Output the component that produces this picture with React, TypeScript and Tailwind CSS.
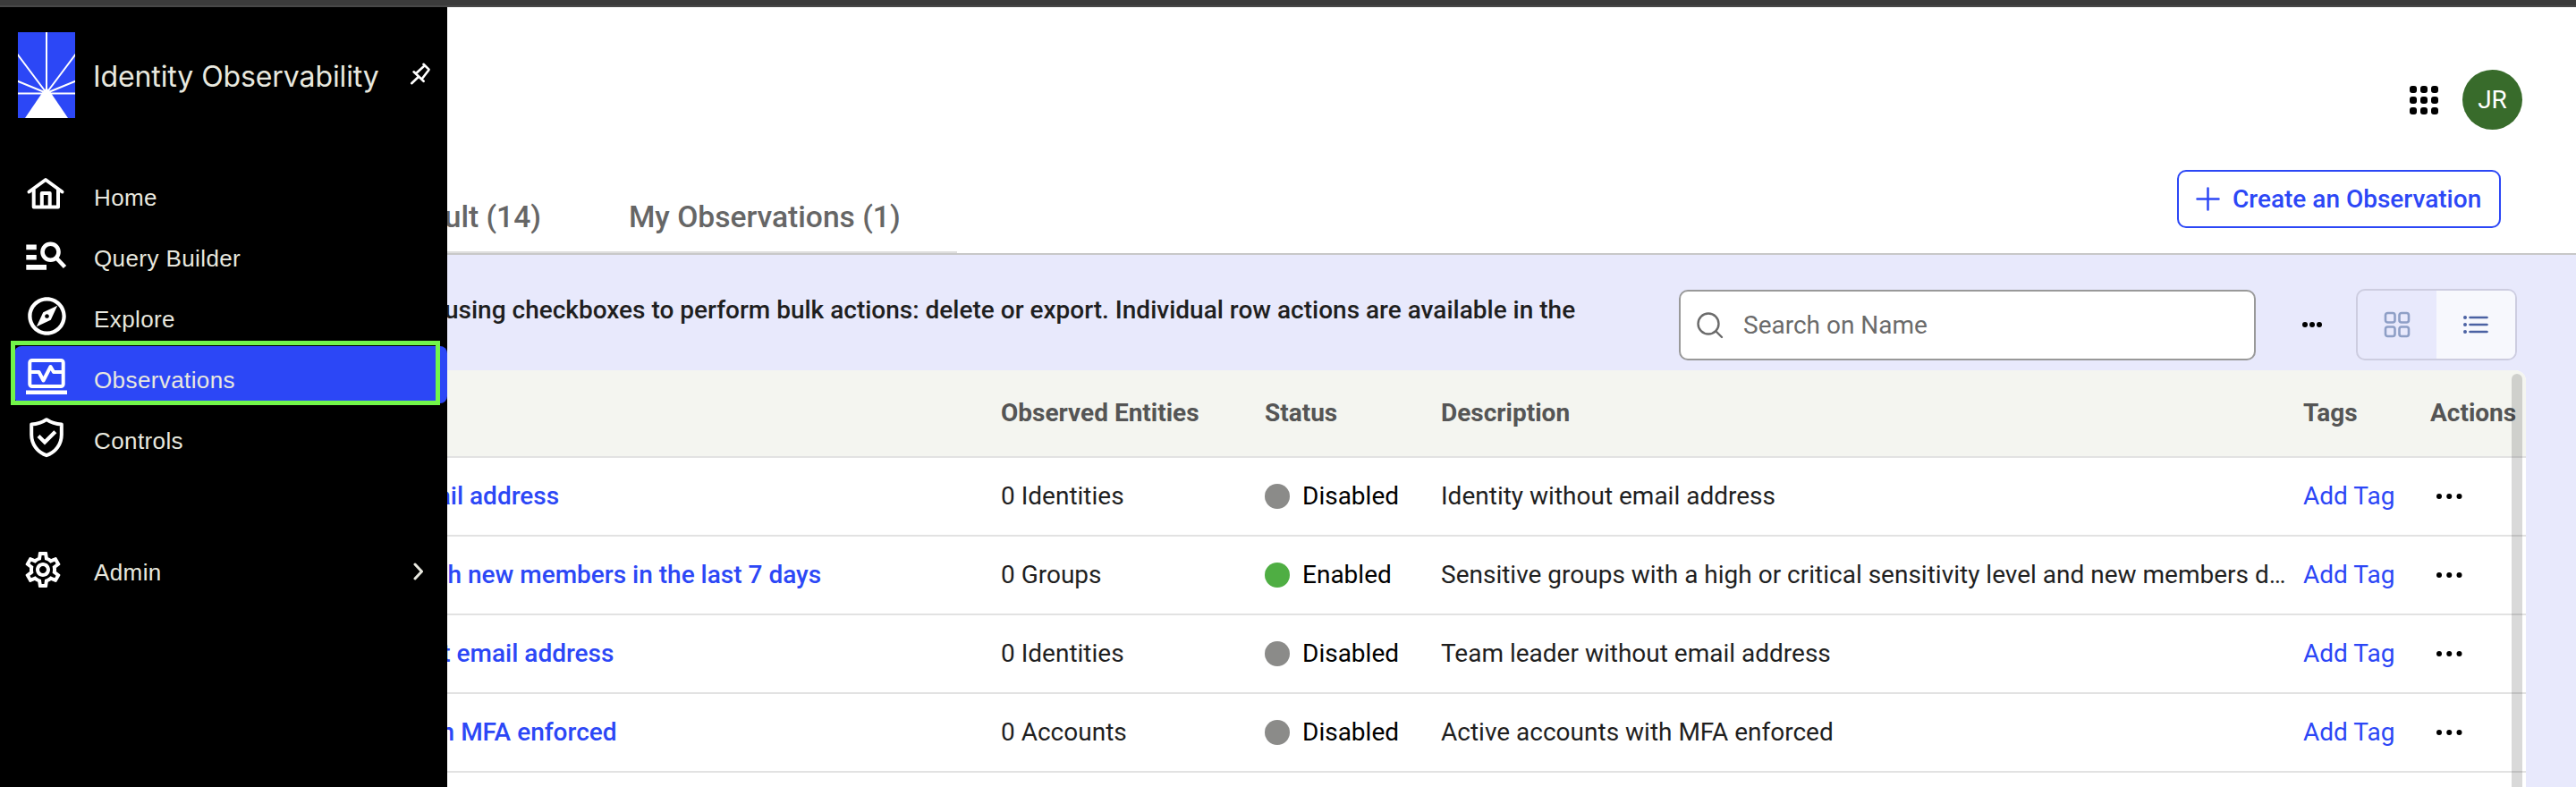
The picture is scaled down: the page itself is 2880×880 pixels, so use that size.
import React from "react";
import { MdOutlineExplore, MdOutlineSettings } from "react-icons/md";

const HomeIcon = () => (
  <svg width="48" height="48" viewBox="0 0 48 48" fill="none" stroke="#fff" strokeWidth="4">
    <path d="M4.500 21.500 23 8l18.500 13.500" strokeLinecap="round" strokeLinejoin="round" />
    <path d="M9.700 19v19.600h27.300V19" strokeLinejoin="round" />
    <path d="M18.800 38V23.100h8.900V38" strokeLinejoin="round" />
  </svg>
);

const QueryIcon = () => (
  <svg width="48" height="48" viewBox="0 0 48 48" fill="none" stroke="#fff">
    <path d="M1.300 15.400h11.500M1.300 26.700h11.500M1.300 37.900h22.700" strokeWidth="5.600" />
    <circle cx="28.500" cy="20.700" r="9" strokeWidth="4.600" />
    <path d="m34.500 27 10 10.500" strokeWidth="4.600" />
  </svg>
);

const ObservationsIcon = () => (
  <svg width="48" height="48" viewBox="0 0 48 48" fill="none" stroke="#fff" strokeWidth="4">
    <rect x="5.3" y="6" width="37.4" height="29" rx="2.5" />
    <path d="M6 19h9.5l5 9.5 8-15.5 3.5 6H42" strokeLinejoin="round" />
    <path d="M1 41.800h46" strokeWidth="4.600" />
  </svg>
);

const ShieldIcon = () => (
  <svg width="48" height="48" viewBox="0 0 48 48" fill="none" stroke="#fff" strokeWidth="4">
    <path d="M24 4.200C19.500 7.200 13 9.300 7.200 9.600V21C7.200 31.500 13.500 40.500 24 44.200C34.500 40.500 40.800 31.500 40.800 21V9.600C35 9.300 28.500 7.200 24 4.200Z" strokeLinejoin="round" />
    <path d="m15 22.500 7 7 11.800-11.800" strokeWidth="4.200" />
  </svg>
);

const PinIcon = () => (
  <svg width="23" height="25" viewBox="0 0 23 25" fill="none" stroke="#fff" strokeWidth="2.600" strokeLinecap="round" strokeLinejoin="round" className="ml-[36px] mt-[34px] shrink-0">
    <path d="m14.500 1.800 6 5.800M3.600 10.300l11 10.500M6.500 11.800l9-8.300M12.700 18.300l7.500-9.800M9 15.700l-7.800 7.500" />
  </svg>
);

const Logo = () => (
  <svg width="64" height="96" viewBox="0 0 64 96" className="shrink-0">
    <rect width="64" height="96" fill="#2c47f6" />
    <g stroke="#fff" strokeWidth="2">
      <path d="M32 0v68M32 68-1 24M32 68 65 24M32 68-1 54.500M32 68l33-13.500M0 68.500h64" />
    </g>
    <path d="M32 62 37 68 56 96H8L27 68Z" fill="#fff" />
  </svg>
);

const Dots = ({ gap, size }: { gap: number; size: number }) => (
  <svg width={gap * 2 + size} height={size} viewBox={`0 0 ${gap * 2 + size} ${size}`}>
    {[0, 1, 2].map((i) => (
      <circle key={i} cx={size / 2 + i * gap} cy={size / 2} r={size / 2} fill="#000" />
    ))}
  </svg>
);

const nav = [
  { label: "Home", icon: <HomeIcon /> },
  { label: "Query Builder", icon: <QueryIcon /> },
  { label: "Explore", icon: <MdOutlineExplore size={51} className="shrink-0" /> },
  { label: "Observations", icon: <ObservationsIcon />, active: true },
  { label: "Controls", icon: <ShieldIcon /> },
];

const rows = [
  { name: "Identity without email address", entities: "0 Identities", on: false, desc: "Identity without email address" },
  { name: "Sensitive groups with new members in the last 7 days", entities: "0 Groups", on: true, desc: "Sensitive groups with a high or critical sensitivity level and new members d…" },
  { name: "Team leader without email address", entities: "0 Identities", on: false, desc: "Team leader without email address" },
  { name: "Active accounts with MFA enforced", entities: "0 Accounts", on: false, desc: "Active accounts with MFA enforced" },
];

function Sidebar() {
  return (
    <aside className="relative h-full w-[500px] shrink-0 bg-black font-['Liberation_Sans',sans-serif] text-[#e8e8df]">
      <div className="flex h-[175px] items-start pl-5 pt-7">
        <Logo />
        <div className="ml-[20px] mt-[30px] w-[319px] whitespace-nowrap font-['Inter',sans-serif] text-[32px] leading-[40px] tracking-[-0.1px]">Identity Observability</div>
        <PinIcon />
      </div>
      <nav className="flex flex-col gap-1 pl-4">
        {nav.map((n) => (
          <div key={n.label} className={`flex h-16 items-center rounded-lg pl-3 ${n.active ? "bg-[#2c47f6]" : ""}`}>
            <div className="mt-1 flex w-12 justify-center text-white">{n.icon}</div>
            <span className="ml-[29px] mt-[11px] text-[26px] leading-8 tracking-[0.4px]">{n.label}</span>
          </div>
        ))}
      </nav>
      <div className="mt-[86px] flex h-16 items-center pl-6">
        <MdOutlineSettings size={48} className="text-white" />
        <span className="ml-[33px] mt-[5px] w-[357px] text-[26px] leading-8 tracking-[0.4px]">Admin</span>
        <svg width="12" height="20" viewBox="0 0 12 20" fill="none" stroke="#e8e8df" strokeWidth="3" strokeLinecap="round" strokeLinejoin="round" className="mt-1">
          <path d="m2 2 7.500 8L2 18" />
        </svg>
      </div>
      <div className="absolute left-3 top-[373px] h-[72px] w-[480px] border-[5px] border-[#72f54a]" />
    </aside>
  );
}

export default function App() {
  return (
    <div className="flex h-[880px] w-[2880px] flex-col overflow-hidden bg-white font-['Roboto',sans-serif] text-[28px] text-[#1f1f1f]">
      <div className="h-2 shrink-0 border-b-2 border-[#484848] bg-[#3b3b3b]" />
      <div className="flex min-h-0 flex-1">
        <Sidebar />
        <main className="flex min-w-0 flex-1 flex-col overflow-hidden bg-[#e8e9fc]">
          <header className="flex h-[277px] shrink-0 justify-between border-b-2 border-[#c8c8c8] bg-white">
            <div className="flex h-[275px] w-[570px] items-end border-b-2 border-[#dedede] pb-[16px] text-[33.6px] font-medium leading-[44px] text-[#666]">
              <div className="flex w-[105px] justify-end whitespace-nowrap">Default (14)</div>
              <div className="ml-[98px] whitespace-nowrap">My Observations (1)</div>
            </div>
            <div className="flex flex-col items-end">
              <div className="mr-[60px] mt-[70px] flex items-center">
                <div className="grid grid-cols-3 gap-1">
                  {Array.from({ length: 9 }, (_, i) => (
                    <div key={i} className="size-2 rounded-[3px] bg-black" />
                  ))}
                </div>
                <div className="ml-[27px] flex size-[67px] items-center justify-center rounded-full bg-[#386b2b] text-white">JR</div>
              </div>
              <button className="mr-[84px] mt-[45px] flex h-[65px] w-[362px] items-center rounded-[10px] border-2 border-[#2c47f6] pl-[19px] font-medium text-[#2c47f6]">
                <svg width="27" height="27" viewBox="0 0 27 27" stroke="#2c47f6" strokeWidth="2.500" strokeLinecap="round">
                  <path d="M13.500 1.500v24M1.500 13.500h24" />
                </svg>
                <span className="ml-[14px] whitespace-nowrap">Create an Observation</span>
              </button>
            </div>
          </header>

          <section className="flex h-[129px] shrink-0 items-start">
            <p className="-ml-[3px] mt-[42px] w-[1380px] whitespace-nowrap font-medium leading-[40px]">
              using checkboxes to perform bulk actions: delete or export. Individual row actions are available in the
            </p>
            <div className="mt-[39px] flex h-[79px] w-[645px] items-center rounded-[10px] border-2 border-[#999] bg-white pl-[18px] text-[#6b6b6b]">
              <svg width="30" height="30" viewBox="0 0 30 30" fill="none" stroke="#6b6b6b" strokeWidth="2.400" strokeLinecap="round">
                <circle cx="13" cy="13" r="11.500" />
                <path d="m21.500 21.500 6.500 6.500" />
              </svg>
              <span className="ml-[22px]">Search on Name</span>
            </div>
            <div className="ml-[52px] mt-[75px] flex">
              <Dots gap={8} size={6} />
            </div>
            <div className="ml-[38px] mt-[38px] flex h-20 w-[180px] overflow-hidden rounded-[10px] border-2 border-[#cdcde0]">
              <div className="flex w-[88px] items-center justify-center">
                <svg width="30" height="30" viewBox="0 0 30 30" fill="none" stroke="#8e9fc6" strokeWidth="2.600">
                  <rect x="2" y="2" width="10.500" height="10.500" rx="2.500" />
                  <rect x="17.500" y="2" width="10.500" height="10.500" rx="2.500" />
                  <rect x="2" y="17.500" width="10.500" height="10.500" rx="2.500" />
                  <rect x="17.500" y="17.500" width="10.500" height="10.500" rx="2.500" />
                </svg>
              </div>
              <div className="flex w-[88px] items-center justify-center bg-[#f7f8fd]">
                <svg width="28" height="22" viewBox="0 0 28 22" stroke="#4b62a3" strokeWidth="2.600" strokeLinecap="round">
                  <path d="M7.500 3h19M7.500 11h19M7.500 19h19" />
                  <path d="M2 3h.01M2 11h.01M2 19h.01" strokeWidth="4" />
                </svg>
              </div>
            </div>
          </section>

          <section className="relative min-h-0 w-[2324px] flex-1 overflow-hidden rounded-tr-xl bg-white">
            <div className="-ml-[252px] w-[2576px]">
              <div className="grid h-[98px] grid-cols-[871px_295px_197px_965px_142px_1fr] items-center border-b-2 border-[#e2e2e2] bg-[#f4f5f0] font-bold text-[#555]">
                <div />
                <div>Observed Entities</div>
                <div>Status</div>
                <div>Description</div>
                <div className="-ml-px">Tags</div>
                <div className="-ml-px">Actions</div>
              </div>
              {rows.map((r) => (
                <div key={r.name} className="grid h-[88px] grid-cols-[871px_295px_197px_964px_143px_1fr] items-center whitespace-nowrap border-b-2 border-[#e2e2e2]">
                  <div className="font-medium text-[#2c47f6]">{r.name}</div>
                  <div>{r.entities}</div>
                  <div className="flex items-center text-black">
                    <span className={`mr-[14px] size-7 rounded-full ${r.on ? "bg-[#4fae43]" : "bg-[#8b8b89]"}`} />
                    {r.on ? "Enabled" : "Disabled"}
                  </div>
                  <div>{r.desc}</div>
                  <div className="text-[#2c47f6]">Add Tag</div>
                  <div className="pl-[6px]">
                    <Dots gap={11.25} size={6} />
                  </div>
                </div>
              ))}
            </div>
            <div className="absolute right-1 top-1 h-[480px] w-3 rounded-t-full bg-black/15" />
          </section>
        </main>
      </div>
    </div>
  );
}
